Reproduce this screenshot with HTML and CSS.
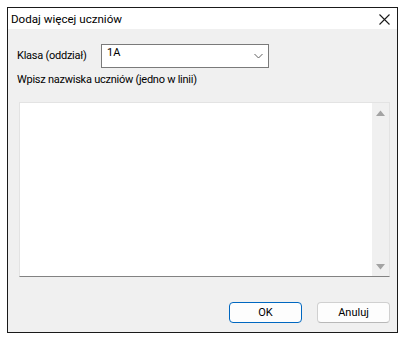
FILE: index.html
```html
<!DOCTYPE html>
<html lang="pl">
<head>
<meta charset="utf-8">
<link rel="stylesheet" href="styles.css">
</head>
<body>
<div class="window">
  <div class="titlebar">
    <span class="title">Dodaj więcej uczniów</span>
    <svg class="close" width="11" height="11" viewBox="0 0 11 11"><path d="M0.5 0.5L10.5 10.5M10.5 0.5L0.5 10.5" stroke="#1a1a1a" stroke-width="1.1" fill="none"/></svg>
  </div>
  <div class="content">
    <div class="row">
      <span class="label">Klasa (oddział)</span>
      <div class="combo">
        <span class="value">1A</span>
        <svg class="chev" width="9" height="6" viewBox="0 0 9 6"><path d="M0.5 1L4.5 5L8.5 1" stroke="#606060" stroke-width="1" fill="none"/></svg>
      </div>
    </div>
    <div class="label hint">Wpisz nazwiska uczniów (jedno w linii)</div>
    <div class="textarea">
      <div class="text"></div>
      <div class="scrollbar">
        <svg width="9" height="6" viewBox="0 0 9 6"><path d="M0 6L4.5 0.5L9 6Z" fill="#a3a3a3"/></svg>
        <svg width="9" height="6" viewBox="0 0 9 6"><path d="M0 0L4.5 5.5L9 0Z" fill="#a3a3a3"/></svg>
      </div>
    </div>
    <div class="buttons">
      <button class="btn primary">OK</button>
      <button class="btn">Anuluj</button>
    </div>
  </div>
</div>
</body>
</html>
```
FILE: styles.css
```css
html, body {
  margin: 0;
  padding: 0;
  background: #ffffff;
}
body {
  font-family: Roboto, "Noto Sans", sans-serif;
  font-size: 11px;
  color: #000;
}
.window {
  margin: 7px 0 0 7px;
  width: 391px;
  height: 326px;
  box-sizing: border-box;
  border: 1px solid #1a1a1a;
  display: flex;
  flex-direction: column;
  background: #f0f0f0;
}
.titlebar {
  height: 21px;
  background: #ffffff;
  display: flex;
  align-items: center;
  justify-content: space-between;
  padding: 0 7px 0 3px;
  flex: none;
}
.title {
  font-size: 11.6px;
  line-height: 16px;
  margin-top: 1px;
}
.close {
  display: block;
  margin-top: 1px;
}
.content {
  flex: 1;
  display: flex;
  flex-direction: column;
  padding: 15px 7px 9px 9px;
}
.row {
  display: flex;
  align-items: center;
  height: 24px;
}
.label {
  line-height: 16px;
  width: 84px;
  flex: none;
  white-space: nowrap;
  letter-spacing: -0.25px;
}
.combo {
  width: 168px;
  height: 24px;
  box-sizing: border-box;
  border: 1px solid #7a7a7a;
  background: #fff;
  display: flex;
  align-items: center;
  justify-content: space-between;
  padding: 0 5px 0 5px;
  margin-left: 0;
}
.value {
  line-height: 16px;
  margin-top: -6px;
}
.chev {
  display: block;
}
.hint {
  width: auto;
  margin-top: 4px;
}
.textarea {
  margin-top: 14px;
  margin-left: 2px;
  height: 175px;
  box-sizing: border-box;
  border-top: 1px solid #e3e3e3;
  border-left: 1px solid #e3e3e3;
  border-right: 1px solid #e3e3e3;
  border-bottom: 1px solid #828282;
  background: #fff;
  display: flex;
}
.text {
  flex: 1;
}
.scrollbar {
  width: 17px;
  background: #f0f0f0;
  display: flex;
  flex-direction: column;
  justify-content: space-between;
  align-items: center;
  padding: 7px 0 6px;
}
.scrollbar svg {
  display: block;
}
.buttons {
  margin-top: auto;
  display: flex;
  justify-content: flex-end;
  gap: 15px;
}
.btn {
  width: 73px;
  height: 21px;
  box-sizing: border-box;
  font-family: inherit;
  font-size: 11px;
  background: #fdfdfd;
  border: 1px solid #d0d0d0;
  border-bottom-color: #b8b8b8;
  border-radius: 4px;
  padding: 0;
  color: #000;
}
.btn.primary {
  border: 1px solid #0067c0;
}
```
